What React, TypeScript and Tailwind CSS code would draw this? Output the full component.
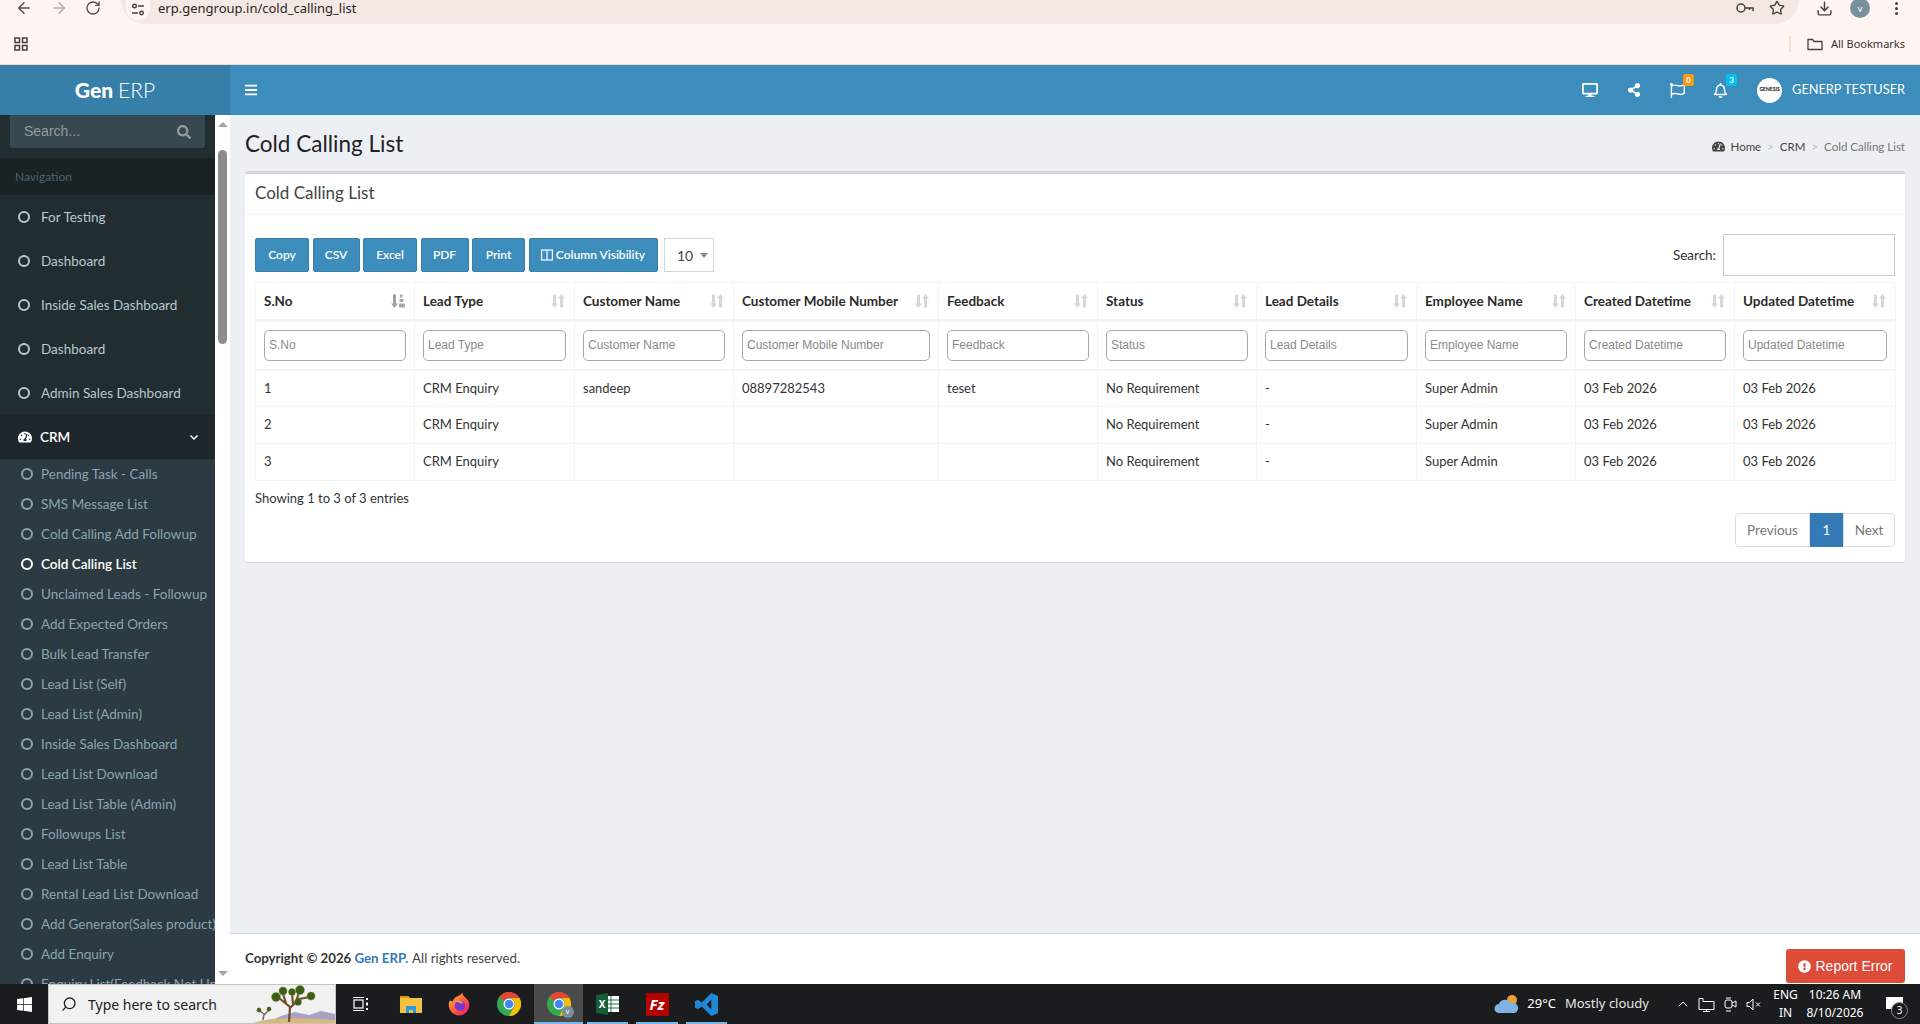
import React from "react";
import { ArrowLeft, ArrowRight, RotateCw, Star, Download, Search as SearchGlass, ChevronUp } from "lucide-react";
import { FaTachometerAlt, FaSearch, FaBars, FaDesktop, FaShareAlt, FaRegFlag, FaRegBell, FaExclamationCircle, FaWindows } from "react-icons/fa";

const mainItems = ["For Testing", "Dashboard", "Inside Sales Dashboard", "Dashboard", "Admin Sales Dashboard"];

const crmItems = [
    "Pending Task - Calls",
    "SMS Message List",
    "Cold Calling Add Followup",
    "Cold Calling List",
    "Unclaimed Leads - Followup",
    "Add Expected Orders",
    "Bulk Lead Transfer",
    "Lead List (Self)",
    "Lead List (Admin)",
    "Inside Sales Dashboard",
    "Lead List Download",
    "Lead List Table (Admin)",
    "Followups List",
    "Lead List Table",
    "Rental Lead List Download",
    "Add Generator(Sales product)",
    "Add Enquiry",
    "Enquiry List(Feedback Not Updated)",
];

const columns = [
    { name: "S.No", width: "w-[159px]" },
    { name: "Lead Type", width: "w-[160px]" },
    { name: "Customer Name", width: "w-[159px]" },
    { name: "Customer Mobile Number", width: "w-[205px]" },
    { name: "Feedback", width: "w-[159px]" },
    { name: "Status", width: "w-[159px]" },
    { name: "Lead Details", width: "w-[160px]" },
    { name: "Employee Name", width: "w-[159px]" },
    { name: "Created Datetime", width: "w-[159px]" },
    { name: "Updated Datetime", width: "w-[161px]" },
];

const rows = [
    ["1", "CRM Enquiry", "sandeep", "08897282543", "teset", "No Requirement", "-", "Super Admin", "03 Feb 2026", "03 Feb 2026"],
    ["2", "CRM Enquiry", "", "", "", "No Requirement", "-", "Super Admin", "03 Feb 2026", "03 Feb 2026"],
    ["3", "CRM Enquiry", "", "", "", "No Requirement", "-", "Super Admin", "03 Feb 2026", "03 Feb 2026"],
];

const buttons = [
    { label: "Copy", width: "w-[54px]" },
    { label: "CSV", width: "w-[47px]" },
    { label: "Excel", width: "w-[54px]" },
    { label: "PDF", width: "w-[48px]" },
    { label: "Print", width: "w-[53px]" },
];

const SortBoth = () => (
    <svg width="14" height="16" viewBox="0 0 14 15" className="shrink-0">
        <path d="M2 1h3v9h2l-3.5 4.5L0 10h2z" fill="#d6d6d6" />
        <path d="M9 14h3V5h2L10.5 0.5 7 5h2z" fill="#d6d6d6" />
    </svg>
);

const SortAsc = () => (
    <svg width="14" height="16" viewBox="0 0 14 15" className="shrink-0">
        <path d="M2 1h3v9h2l-3.5 4.5L0 10h2z" fill="#a0a0a0" />
        <path d="M9 1h2.5v3H9zM8.5 5.500h4v3h-4zM8 10h6v4H8z" fill="#a8a8a8" />
    </svg>
);

const Ring = ({ active, main }: { active?: boolean; main?: boolean }) => (
    <span className={`block h-3 w-3 shrink-0 rounded-full border-2 ${active ? "border-white" : main ? "border-[#b8c7ce]" : "border-[#8aa4af]"}`} />
);

const ChromeLogo = ({ size = 24 }: { size?: number }) => (
    <svg width={size} height={size} viewBox="0 0 48 48">
        <circle cx="24" cy="24" r="24" fill="#34a853" />
        <path d="M24 0a24 24 0 0 1 20.8 12H24a12 12 0 0 0-10.4 6L5.2 9.5A24 24 0 0 1 24 0z" fill="#ea4335" />
        <path d="M44.8 12A24 24 0 0 1 24 48l10.4-18A12 12 0 0 0 24 12z" fill="#fbbc04" />
        <circle cx="24" cy="24" r="11" fill="#fff" />
        <circle cx="24" cy="24" r="8.5" fill="#4285f4" />
    </svg>
);

const BrowserBar = () => (
    <div className="h-[65px] shrink-0 border-b border-[#f5d9cc] bg-[#fff6f3]">
        <div className="flex h-6 items-center">
            <div className="flex w-[121px] shrink-0 items-center gap-[17px] pb-[8px] pl-[15px] text-[#5f4b45]">
                <ArrowLeft size={18} />
                <ArrowRight size={18} className="text-[#b9aeaa]" />
                <RotateCw size={16} />
            </div>
            <div className="flex h-[24px] flex-1 items-center rounded-b-[24px] bg-[#f3e8e4] pb-[8px] pl-[5px]">
                <span className="-mb-[4px] flex h-[20px] w-[24px] items-center justify-center rounded-b-full bg-[#fff6f3]">
                    <svg width="14" height="14" viewBox="0 0 14 14" fill="none" stroke="#4a3f3b" strokeWidth="1.4">
                        <circle cx="3.5" cy="3" r="1.8" />
                        <path d="M7 3h6M1 10h6" />
                        <circle cx="10.5" cy="10" r="1.8" />
                    </svg>
                </span>
                <span className="ml-[8px] text-[13px] leading-[15px] text-[#2b2523] [font-family:'Noto_Sans','Liberation_Sans',sans-serif]">erp.gengroup.in/cold_calling_list</span>
                <div className="ml-auto flex items-center gap-[15px] pr-[14px] text-[#4a3f3b]">
                    <svg width="18" height="12" viewBox="0 0 18 12" fill="none" stroke="#4a3f3b" strokeWidth="1.5">
                        <circle cx="5" cy="6" r="4" />
                        <path d="M9 6h8v3M13.5 6v2" />
                    </svg>
                    <Star size={16} />
                </div>
            </div>
            <div className="flex w-[121px] shrink-0 items-center pb-[8px] pl-[17px] text-[#4a3f3b]">
                <Download size={17} />
                <span className="ml-[17px] flex h-5 w-5 items-center justify-center rounded-full bg-[#78909c] text-[10px] text-white">v</span>
                <span className="ml-[25px] flex flex-col gap-[2px]">
                    <span className="h-[3px] w-[3px] rounded-full bg-[#4a3f3b]" />
                    <span className="h-[3px] w-[3px] rounded-full bg-[#4a3f3b]" />
                    <span className="h-[3px] w-[3px] rounded-full bg-[#4a3f3b]" />
                </span>
            </div>
        </div>
        <div className="flex h-10 items-center pl-[14px] pr-[15px]">
            <svg width="14" height="14" viewBox="0 0 14 14" fill="none" stroke="#4a3f3b" strokeWidth="1.5">
                <rect x="1" y="1" width="4.5" height="4.5" />
                <rect x="8.5" y="1" width="4.5" height="4.5" />
                <rect x="1" y="8.5" width="4.5" height="4.5" />
                <rect x="8.5" y="8.5" width="4.5" height="4.5" />
            </svg>
            <span className="ml-auto h-4 w-[2px] bg-[#f9dccb]" />
            <svg width="16" height="13" viewBox="0 0 16 13" fill="none" stroke="#4a3f3b" strokeWidth="1.3" className="ml-[16px]">
                <path d="M1 11.5V1.5h4.5l1.5 2h8v8z" />
            </svg>
            <span className="ml-[8px] text-[11px] text-[#3a3230] [font-family:'Noto_Sans','Liberation_Sans',sans-serif]">All Bookmarks</span>
        </div>
    </div>
);

const TopHeader = () => (
    <div className="flex h-[50px] shrink-0 bg-[#3c8dbc] text-white">
        <div className="flex w-[230px] shrink-0 items-center justify-center bg-[#367fa9] text-[21px]">
            <b className="font-black">Gen</b>
            <span className="ml-[5px] font-light">ERP</span>
        </div>
        <div className="flex w-[40px] items-center justify-center pl-[2px]">
            <FaBars size={14} />
        </div>
        <div className="ml-auto flex items-center pr-[15px]">
            <FaDesktop size={16} />
            <FaShareAlt size={14} className="ml-[29px]" />
            <span className="relative ml-[29px] block">
                <FaRegFlag size={15} />
                <span className="absolute -right-[9px] -top-[9px] flex h-3 w-[11px] items-center justify-center rounded-[2px] bg-[#f39c12] text-[8px] font-bold leading-none">0</span>
            </span>
            <span className="relative ml-[28px] block">
                <FaRegBell size={15} />
                <span className="absolute -right-[9px] -top-[9px] flex h-3 w-[11px] items-center justify-center rounded-[2px] bg-[#00c0ef] text-[8px] font-bold leading-none">3</span>
            </span>
            <span className="ml-[29px] flex h-[25px] w-[25px] items-center justify-center overflow-hidden rounded-full bg-white text-[5px] font-bold text-black">GENESIS</span>
            <span className="ml-[10px] text-[12.75px]">GENERP TESTUSER</span>
        </div>
    </div>
);

const Sidebar = () => (
    <div className="flex w-[230px] shrink-0 bg-white">
        <div className="w-[215px] shrink-0 overflow-hidden bg-[#222d32] text-[13.5px]">
            <div className="h-[43px] px-[10px]">
                <div className="flex h-[33px] items-center justify-between rounded-b-[3px] bg-[#374850] pl-[14px] pr-[14px] text-[#999]">
                    <span className="text-[14px] [font-family:'Liberation_Sans',sans-serif]">Search...</span>
                    <FaSearch size={14} />
                </div>
            </div>
            <div className="flex h-[37px] items-center bg-[#1a2226] pl-[15px] text-[12px] text-[#4b646f]">Navigation</div>
            {mainItems.map((item, i) => (
                <div key={i} className="flex h-[44px] items-center gap-[11px] pl-[18px] text-[#b8c7ce]">
                    <Ring main />
                    <span>{item}</span>
                </div>
            ))}
            <div className="flex h-[44px] items-center bg-[#1e282c] pl-[18px] pr-[16px] font-semibold text-white">
                <FaTachometerAlt size={14} />
                <span className="ml-[8px]">CRM</span>
                <svg width="10" height="10" viewBox="0 0 10 10" fill="none" stroke="#fff" strokeWidth="1.5" className="ml-auto">
                    <path d="M1.5 3.5L5 7l3.5-3.5" />
                </svg>
            </div>
            <div className="bg-[#2c3b41] pl-[21px]">
                {crmItems.map((item) => {
                    const active = item === "Cold Calling List";
                    return (
                        <div key={item} className={`flex h-[30px] items-center gap-[8px] whitespace-nowrap text-[13.5px] ${active ? "font-semibold text-white" : "text-[#8aa4af]"}`}>
                            <Ring active={active} />
                            <span>{item}</span>
                        </div>
                    );
                })}
            </div>
        </div>
        <div className="flex w-[15px] flex-col items-center pt-[7px]">
            <span className="h-0 w-0 border-x-[5px] border-b-[5px] border-x-transparent border-b-[#a3a3a3]" />
            <span className="mt-[23px] h-[194px] w-[9px] rounded-full bg-[#8c8c8c]" />
            <span className="mb-[8px] mt-auto h-0 w-0 border-x-[5px] border-t-[5px] border-x-transparent border-t-[#a3a3a3]" />
        </div>
    </div>
);

const DataTable = () => (
    <table className="w-[1640px] table-fixed border-collapse text-[13px] text-[#333]">
        <colgroup>
            {columns.map((c) => (
                <col key={c.name} className={c.width} />
            ))}
        </colgroup>
        <thead>
            <tr className="h-[38px] border-b-[3px] border-[#f4f4f4]">
                {columns.map((c, i) => (
                    <th key={c.name} className="border border-b-0 border-[#f4f4f4] pl-[8px] pr-[9px] text-left text-[13.5px] font-bold text-[#2b2b2b]">
                        <div className="flex items-center justify-between whitespace-nowrap">
                            <span>{c.name}</span>
                            {i === 0 ? <SortAsc /> : <SortBoth />}
                        </div>
                    </th>
                ))}
            </tr>
            <tr className="h-[49px] border-b-[2px] border-[#f4f4f4]">
                {columns.map((c) => (
                    <td key={c.name} className="border border-b-0 border-t-0 border-[#f4f4f4] px-[8px]">
                        <input
                            placeholder={c.name}
                            className="block h-[31px] w-full rounded-[5px] border border-[#a9a9a9] px-[4px] text-[12px] [font-family:'Liberation_Sans',sans-serif] placeholder:text-[#8a8a8a]"
                        />
                    </td>
                ))}
            </tr>
        </thead>
        <tbody>
            {rows.map((row) => (
                <tr key={row[0]} className="h-[37px]">
                    {row.map((cell, i) => (
                        <td key={i} className="border border-[#f4f4f4] px-[8px]">{cell}</td>
                    ))}
                </tr>
            ))}
        </tbody>
    </table>
);

const ContentBox = () => (
    <div className="mx-[15px] h-[391px] rounded-[3px] border-t-[3px] border-[#d2d6de] bg-white shadow-[0_1px_1px_rgba(0,0,0,0.1)]">
        <div className="flex h-[41px] items-center border-b border-[#f4f4f4] pb-[3px] pl-[10px] text-[17px] text-[#444]">Cold Calling List</div>
        <div className="px-[10px]">
            <div className="flex h-[67px] items-start pt-[18px]">
                <div className="flex items-center gap-[3.5px] pt-[5px]">
                    {buttons.map((b) => (
                        <button key={b.label} className={`h-[34px] rounded-[2px] border border-[#367fa9] bg-[#3c8dbc] text-[12px] font-semibold text-white ${b.width}`}>{b.label}</button>
                    ))}
                    <button className="flex h-[34px] w-[129px] items-center justify-center gap-[3px] rounded-[2px] border border-[#367fa9] bg-[#3c8dbc] text-[12px] font-semibold text-white">
                        <svg width="12" height="12" viewBox="0 0 12 12" fill="none" stroke="#fff" strokeWidth="1.2">
                            <rect x="0.6" y="1" width="10.8" height="10" />
                            <path d="M6 1v10" />
                        </svg>
                        Column Visibility
                    </button>
                    <div className="ml-[3px] flex h-[34px] w-[50px] items-center gap-[7px] border border-[#d2d6de] pl-[12px] text-[14px] text-[#444]">
                        10
                        <span className="h-0 w-0 border-x-[4px] border-t-[5px] border-x-transparent border-t-[#888]" />
                    </div>
                </div>
                <div className="ml-auto mt-[1px] flex items-center gap-[7px] text-[13.5px] text-[#333]">
                    <span>Search:</span>
                    <input className="block h-[42px] w-[172px] border border-[#c9c9d6]" />
                </div>
            </div>
            <DataTable />
            <div className="flex h-[36px] items-center text-[13px] text-[#333]">Showing 1 to 3 of 3 entries</div>
            <div className="mt-[-4px] flex justify-end">
                <div className="flex h-[34px] items-stretch text-[13.5px]">
                    <span className="flex w-[75px] items-center justify-center rounded-l-[4px] border border-[#ddd] text-[#777]">Previous</span>
                    <span className="flex w-[33px] items-center justify-center bg-[#337ab7] text-white">1</span>
                    <span className="flex w-[52px] items-center justify-center rounded-r-[4px] border border-[#ddd] text-[#777]">Next</span>
                </div>
            </div>
        </div>
    </div>
);

const MainArea = () => (
    <div className="flex min-w-0 flex-1 flex-col bg-[#ecf0f5]">
        <div className="flex h-[56px] shrink-0 items-center justify-between px-[15px] pt-[1px]">
            <h1 className="text-[22.5px] font-normal text-[#222]">Cold Calling List</h1>
            <div className="mt-[6px] flex items-center text-[11.5px] text-[#444]">
                <FaTachometerAlt size={13} />
                <span className="ml-[6px]">Home</span>
                <span className="mx-[6px] text-[#bbb]">&gt;</span>
                <span>CRM</span>
                <span className="mx-[6px] text-[#bbb]">&gt;</span>
                <span className="text-[#777]">Cold Calling List</span>
            </div>
        </div>
        <ContentBox />
        <div className="relative mt-auto flex h-[51px] shrink-0 items-center border-t border-[#d2d6de] bg-white pl-[15px] text-[13.25px] text-[#444]">
            <b className="text-[#333]">Copyright © 2026 <span className="text-[#337ab7]">Gen ERP.</span></b>
            <span className="ml-[4px]">All rights reserved.</span>
            <button className="absolute bottom-[1px] right-[15px] flex h-[34px] w-[119px] items-center justify-center gap-[4px] rounded-[3px] bg-[#dd4b39] text-[14px] text-white [font-family:'Liberation_Sans',sans-serif]">
                <FaExclamationCircle size={13} />
                Report Error
            </button>
        </div>
    </div>
);

const TaskIcon = ({ children, active, running }: { children: React.ReactNode; active?: boolean; running?: boolean }) => (
    <div className={`relative flex h-10 w-[49.3px] items-center justify-center ${active ? "bg-[#4a4a4a]" : ""}`}>
        {children}
        {running && <span className={`absolute bottom-0 h-[2px] bg-[#76b9ed] ${active ? "inset-x-0" : "inset-x-[4px]"}`} />}
    </div>
);

const Taskbar = () => (
    <div className="flex h-10 shrink-0 items-center bg-[#1b1c1e] text-white [font-family:'Noto_Sans','Liberation_Sans',sans-serif]">
        <div className="flex w-[48px] items-center justify-center">
            <FaWindows size={17} />
        </div>
        <div className="flex h-10 w-[288px] items-center overflow-hidden border border-[#c4c4c4] bg-[#f1f1f1] pl-[12px] text-[14px] text-[#222]">
            <SearchGlass size={16} className="-scale-x-100" />
            <span className="ml-[11px]">Type here to search</span>
            <svg width="84" height="40" viewBox="0 0 84 40" className="ml-auto shrink-0">
                <path d="M14 40l16-8 14-4 14 3 12-4 14 3v10z" fill="#a9a2c4" />
                <path d="M0 40c14-6 40-7 84-4v4z" fill="#d9b878" />
                <path d="M38 38l1-15-11-9M39 24l9-9 11-2M45 18l3-10M35 19l-3-9M42 20l-1-11" fill="none" stroke="#6e4f2f" strokeWidth="2.2" />
                <path d="M12 36l1-6-4-3M13 31l5-5" fill="none" stroke="#7d6a55" strokeWidth="1.5" />
                <g fill="#3f5f18" stroke="#8a9a3a" strokeWidth="1" strokeDasharray="1 1.5">
                    <circle cx="25" cy="13" r="4.5" />
                    <circle cx="32" cy="7" r="4" />
                    <circle cx="41" cy="8" r="3.5" />
                    <circle cx="49" cy="6" r="4.5" />
                    <circle cx="60" cy="12" r="4" />
                    <circle cx="47" cy="18" r="3.5" />
                    <circle cx="8" cy="26" r="2.2" />
                    <circle cx="18" cy="25" r="2.2" />
                </g>
            </svg>
        </div>
        <div className="flex h-10 w-[50px] items-center justify-center">
            <svg width="16" height="16" viewBox="0 0 16 16" fill="none" stroke="#fff" strokeWidth="1.2">
                <path d="M0 1.5h11M0 14.5h11" />
                <rect x="1" y="4" width="9" height="8" />
                <path d="M14 2v2M14 6.5v3M14 12v2" strokeWidth="2" />
            </svg>
        </div>
        <TaskIcon>
            <svg width="22" height="20" viewBox="0 0 22 20">
                <path d="M0 2h8l2 2h12v15H0z" fill="#f6c23e" />
                <path d="M0 2h8l2 2H0z" fill="#d99a1c" />
                <path d="M6 12h10v7h-3v-3H9v3H6z" fill="#2b9ae6" />
            </svg>
        </TaskIcon>
        <TaskIcon>
            <svg width="23" height="24" viewBox="0 0 24 24">
                <defs>
                    <linearGradient id="ffx" x1="0" y1="0" x2="1" y2="1">
                        <stop offset="0" stopColor="#ffbd2e" />
                        <stop offset="0.6" stopColor="#ff4f3e" />
                        <stop offset="1" stopColor="#e31587" />
                    </linearGradient>
                </defs>
                <path d="M12 24A11 11 0 0 1 2 8c1 1 2 1 3 1 1-3 3-4 5-5 2-1 4-2 5-4 0 3 2 4 4 6 2 2 4 5 3 9a11 11 0 0 1-10 9z" fill="url(#ffx)" />
                <circle cx="12.5" cy="13.5" r="5.5" fill="#7a35d0" />
                <path d="M8 9c3-2 7 0 8 3-2-1-5-1-8-3z" fill="#ff9640" />
            </svg>
        </TaskIcon>
        <TaskIcon><ChromeLogo /></TaskIcon>
        <TaskIcon active running>
            <span className="relative block h-6 w-6">
                <ChromeLogo />
                <span className="absolute -bottom-[2px] -right-[3px] flex h-[12px] w-[12px] items-center justify-center rounded-full bg-[#78909c] text-[7px] text-white">v</span>
            </span>
        </TaskIcon>
        <TaskIcon running>
            <svg width="23" height="22" viewBox="0 0 23 22">
                <rect x="8" y="3" width="15" height="16" fill="#fff" />
                <path d="M15 3v16M8 7h15M8 11h15M8 15h15" stroke="#217346" strokeWidth="1" />
                <path d="M0 2l12-2v22L0 20z" fill="#185c37" />
                <text x="6" y="15" textAnchor="middle" fontSize="10" fontWeight="700" fill="#fff">X</text>
            </svg>
        </TaskIcon>
        <TaskIcon running>
            <div className="flex h-[23px] w-[23px] items-center justify-center bg-[#b50000] text-[15px] font-bold italic leading-none text-white">Fz</div>
        </TaskIcon>
        <TaskIcon running>
            <svg width="23" height="23" viewBox="0 0 24 24">
                <path d="M17 0l7 3v18l-7 3L7 14l-4 3-3-1.5v-7L3 7l4 3zM17 7l-5 5 5 5z" fill="#1c8ad6" fillRule="evenodd" />
            </svg>
        </TaskIcon>
        <div className="ml-auto flex h-10 items-center text-[13px]">
            <svg width="26" height="22" viewBox="0 0 26 22">
                <circle cx="18" cy="7" r="5" fill="#f0a030" />
                <path d="M5 20a4.5 4.5 0 0 1 0-9 6 6 0 0 1 11-1 5 5 0 0 1 5 10z" fill="#7fb3e8" />
            </svg>
            <span className="ml-[7px]">29°C</span>
            <span className="ml-[9px] text-[#e6e6e6]">Mostly cloudy</span>
            <ChevronUp size={16} strokeWidth={1.5} className="ml-[26px]" />
            <svg width="17" height="15" viewBox="0 0 17 15" fill="none" stroke="#fff" className="ml-[7px]">
                <path d="M1 1.5h4v3h11v8H1zM8.5 12.5v2M5 14.5h7" />
            </svg>
            <svg width="13" height="15" viewBox="0 0 13 15" fill="none" stroke="#fff" className="ml-[9px]">
                <rect x="1" y="3" width="7" height="8" rx="2" />
                <path d="M8 6l4-2v6l-4-2M2 1h5M2 14h5" />
            </svg>
            <svg width="15" height="13" viewBox="0 0 15 13" fill="none" stroke="#fff" className="ml-[9px]">
                <path d="M1 4.5h2.5L7 1v11L3.5 8.5H1zM10 4.5l4 4M14 4.5l-4 4" />
            </svg>
            <div className="ml-[11px] flex w-[27px] flex-col items-center text-[12px] leading-[18px]">
                <span>ENG</span>
                <span>IN</span>
            </div>
            <div className="ml-[5px] flex w-[62px] flex-col items-center text-[12px] leading-[18px]">
                <span>10:26 AM</span>
                <span>8/10/2026</span>
            </div>
            <div className="relative ml-[20px] mr-[12px] w-[22px]">
                <svg width="17" height="15" viewBox="0 0 17 15" fill="#fff">
                    <path d="M0 0h17v12H8l-3 3v-3H0z" />
                </svg>
                <span className="absolute -bottom-[7px] right-0 flex h-[17px] w-[17px] items-center justify-center rounded-full border border-[#888] bg-[#1b1c1e] text-[10px]">3</span>
            </div>
        </div>
    </div>
);

export default function App() {
    return (
        <div className="flex h-[1024px] w-[1920px] flex-col overflow-hidden [font-family:Lato,'Liberation_Sans',sans-serif]">
            <BrowserBar />
            <TopHeader />
            <div className="flex min-h-0 flex-1">
                <Sidebar />
                <MainArea />
            </div>
            <Taskbar />
        </div>
    );
}
